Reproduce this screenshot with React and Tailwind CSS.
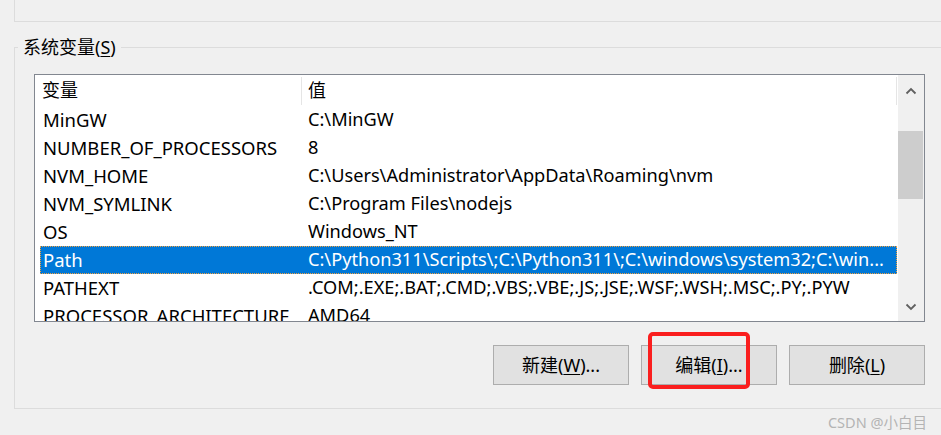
import { useState } from 'react';

const rows = [
  ['MinGW', 'C:\\MinGW'],
  ['NUMBER_OF_PROCESSORS', '8'],
  ['NVM_HOME', 'C:\\Users\\Administrator\\AppData\\Roaming\\nvm'],
  ['NVM_SYMLINK', 'C:\\Program Files\\nodejs'],
  ['OS', 'Windows_NT'],
  ['Path', 'C:\\Python311\\Scripts\\;C:\\Python311\\;C:\\windows\\system32;C:\\win...'],
  ['PATHEXT', '.COM;.EXE;.BAT;.CMD;.VBS;.VBE;.JS;.JSE;.WSF;.WSH;.MSC;.PY;.PYW'],
  ['PROCESSOR_ARCHITECTURE', 'AMD64'],
];

function Chevron({ up }) {
  return (
    <svg width="12" height="8" viewBox="0 0 12 8">
      <path
        d={up ? 'M1.5 6.5 L6 2 L10.5 6.5' : 'M1.5 1.5 L6 6 L10.5 1.5'}
        fill="none"
        stroke="#606060"
        strokeWidth="1.8"
      />
    </svg>
  );
}

function Btn({ label, hot, tail }) {
  return (
    <button className="w-[136px] h-[40px] border border-[#adadad] bg-[#e1e1e1] flex items-center justify-center text-[18px] text-black">
      {label}(<span className="underline underline-offset-2">{hot}</span>){tail}
    </button>
  );
}

export default function App() {
  const [selected, setSelected] = useState(5);

  return (
    <div
      className="relative w-[941px] h-[435px] overflow-hidden bg-[#f0f0f0] text-black"
      style={{ fontFamily: '"Noto Sans", "Noto Sans CJK SC", sans-serif' }}
    >
      {/* previous group box (user variables) */}
      <div className="ml-[14px] w-[940px] h-[22px] border-l border-b border-[#dcdcdc]" />

      {/* system variables group box */}
      <div className="relative mt-[25px] ml-[14px] w-[940px] h-[362px] border-l border-t border-b border-[#dcdcdc] pl-[19px] pt-[26px]">
        <span className="absolute left-[3px] -top-[13px] px-[5px] bg-[#f0f0f0] text-[18px] leading-[24px]">
          系统变量(<span className="underline underline-offset-2">S</span>)
        </span>

        <div className="w-[891px] h-[248px] border border-[#828790] bg-white flex">
          <div className="w-[863px] overflow-hidden">
            <div className="h-[31px] flex items-center text-[18px]">
              <div className="w-[266px] pl-[7px]">变量</div>
              <div className="w-px h-[28px] bg-[#e5e5e5]" />
              <div className="flex-1 pl-[6px]">值</div>
              <div className="w-px h-[28px] bg-[#e5e5e5] mr-[1px]" />
            </div>
            {rows.map(([name, value], i) => (
              <div
                key={name}
                onClick={() => setSelected(i)}
                className={
                  'ml-[5px] w-[857px] h-[28px] flex items-center whitespace-nowrap ' +
                  (i === selected
                    ? 'bg-[#0078d7] text-white outline outline-1 outline-dotted outline-[#f0a040] -outline-offset-1'
                    : '')
                }
              >
                <div className="w-[268px] pl-[3px] shrink-0 text-[18.5px]">{name}</div>
                <div className="flex-1 overflow-hidden text-[18.2px]">{value}</div>
              </div>
            ))}
          </div>
          <div className="flex-1 bg-[#f0f0f0] flex flex-col">
            <div className="h-[32px] flex items-center justify-center">
              <Chevron up />
            </div>
            <div className="h-[24px]" />
            <div className="h-[68px] bg-[#cdcdcd] mr-[1px]" />
            <div className="flex-1" />
            <div className="h-[28px] flex items-center justify-center">
              <Chevron />
            </div>
          </div>
        </div>

        <div className="w-[891px] mt-[23px] flex justify-end gap-[12px]">
          <Btn label="新建" hot="W" tail="..." />
          <Btn label="编辑" hot="I" tail="..." />
          <Btn label="删除" hot="L" tail="" />
        </div>
      </div>

      <div className="h-[27px] flex items-center justify-end pr-[14px] text-[14.5px] text-[#b4b4b4]">
        CSDN @小白目
      </div>

      {/* annotation */}
      <div className="absolute left-[648px] top-[332px] w-[102px] h-[57px] border-[4px] border-[#fa1e1e] rounded-[5px]" />
    </div>
  );
}
